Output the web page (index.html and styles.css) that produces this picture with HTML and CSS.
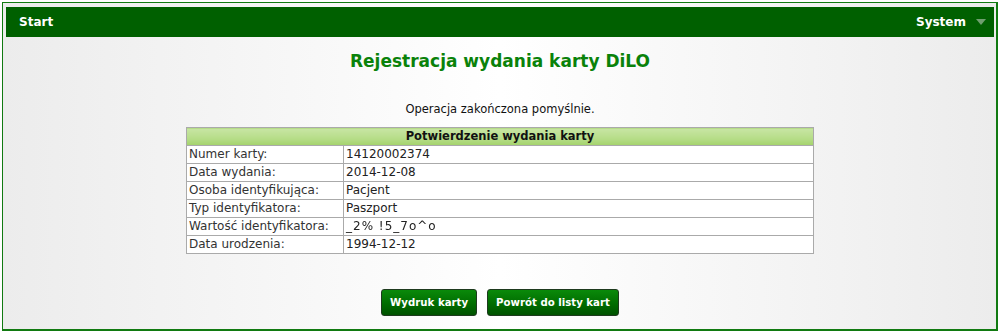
FILE: index.html
```html
<!DOCTYPE html>
<html lang="pl">
<head>
<meta charset="utf-8">
<link rel="stylesheet" href="styles.css">
</head>
<body>
<div class="frame">
  <nav class="navbar">
    <span class="nav-item">Start</span>
    <span class="nav-item nav-right">System <span class="caret"></span></span>
  </nav>
  <h1 class="title">Rejestracja wydania karty DiLO</h1>
  <p class="message">Operacja zakończona pomyślnie.</p>
  <table class="info">
    <thead>
      <tr><th colspan="2">Potwierdzenie wydania karty</th></tr>
    </thead>
    <tbody>
      <tr><td class="label">Numer karty:</td><td>14120002374</td></tr>
      <tr><td class="label">Data wydania:</td><td>2014-12-08</td></tr>
      <tr><td class="label">Osoba identyfikująca:</td><td>Pacjent</td></tr>
      <tr><td class="label">Typ identyfikatora:</td><td>Paszport</td></tr>
      <tr><td class="label">Wartość identyfikatora:</td><td class="blur">_2% !5_7o^o</td></tr>
      <tr><td class="label">Data urodzenia:</td><td>1994-12-12</td></tr>
    </tbody>
  </table>
  <div class="actions">
    <button class="btn">Wydruk karty</button>
    <button class="btn">Powrót do listy kart</button>
  </div>
</div>
</body>
</html>
```
FILE: styles.css
```css
html, body {
  margin: 0;
  padding: 0;
  background: #ffffff;
}
body {
  font-family: "DejaVu Sans", Verdana, sans-serif;
  font-size: 12px;
  color: #222;
}
.frame {
  margin: 2px 0 0 2px;
  width: 996px;
  height: 329px;
  border: 1px solid #117a11;
  border-bottom-width: 2px;
  border-right-width: 2px;
  background: linear-gradient(to right, #ececec 0%, #ffffff 50%, #ececec 100%);
  padding: 4px 2px 0 3px;
  box-sizing: border-box;
  display: flex;
  flex-direction: column;
  align-items: center;
}
.navbar {
  align-self: stretch;
  height: 30px;
  background: #006000;
  display: flex;
  align-items: center;
  justify-content: space-between;
  padding: 0 8px 0 13px;
}
.nav-item {
  color: #ffffff;
  font-weight: bold;
  font-size: 12px;
  display: flex;
  align-items: center;
}
.caret {
  display: inline-block;
  width: 0;
  height: 0;
  margin-left: 10px;
  border-left: 5px solid transparent;
  border-right: 5px solid transparent;
  border-top: 6px solid #6f9f6f;
}
.title {
  margin: 14px 0 0 0;
  font-size: 17px;
  color: #0a820a;
  font-weight: bold;
  line-height: 20px;
}
.message {
  margin: 30px 0 0 0;
  line-height: 16px;
  font-size: 11.5px;
  color: #111;
}
.info {
  margin-top: 10px;
  width: 628px;
  border-collapse: collapse;
  border: 1px solid #aaaaaa;
  background: #ffffff;
}
.info th {
  height: 17px;
  padding: 0;
  font-size: 11.5px;
  font-weight: bold;
  color: #111;
  background: linear-gradient(to bottom, #c8e5a4 0%, #b6dd88 60%, #a3d36c 100%);
  border: 1px solid #aaaaaa;
  line-height: 17px;
}
.info td {
  height: 17px;
  padding: 0 0 0 2px;
  border: 1px solid #aaaaaa;
  line-height: 17px;
  font-size: 12px;
  color: #222;
  white-space: nowrap;
}
.info td.label {
  width: 154px;
  color: #333;
}
.blur {
  letter-spacing: 1px;
  color: #777;
  filter: blur(0.4px);
}
.actions {
  margin-top: 35px;
  display: flex;
  gap: 10px;
}
.btn {
  height: 27px;
  padding: 0 8px;
  font-family: "DejaVu Sans", Verdana, sans-serif;
  font-size: 10.2px;
  font-weight: bold;
  color: #ffffff;
  background: linear-gradient(to bottom, #0a8a0a 0%, #006a00 60%, #005200 100%);
  border: 1px solid #1e3a1e;
  border-radius: 3px;
  cursor: pointer;
}
```
